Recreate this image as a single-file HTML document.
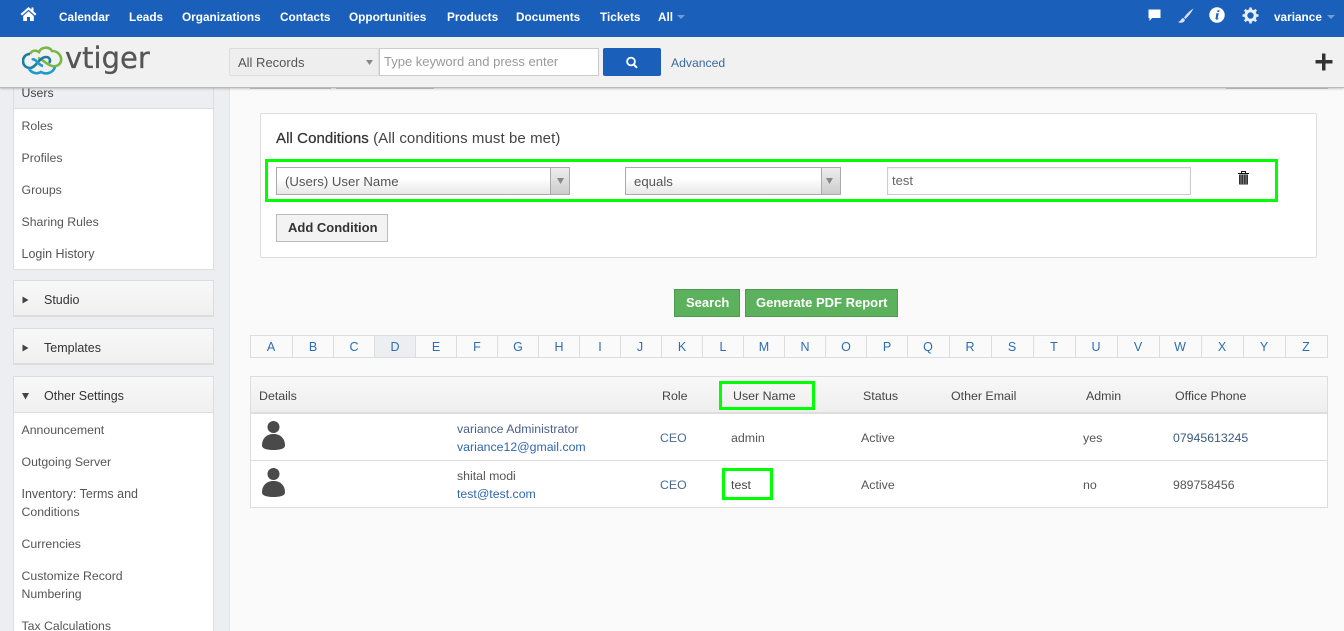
<!DOCTYPE html>
<html><head><meta charset="utf-8"><title>vtiger</title>
<style>
html{margin:0;padding:0;height:631px;overflow:hidden}
body{margin:0;padding:0;width:1344px;height:631px;position:relative;overflow:hidden;background:#fafafa;font:13px/18px "Liberation Sans",sans-serif;color:#444}
div,span.t{position:absolute;box-sizing:border-box}
.t{position:absolute;white-space:nowrap;line-height:18px}
.n{color:#fff;font-weight:bold;font-size:11.8px;top:8px}
.s{left:21.5px;color:#555;font-size:12.3px}
.h{color:#444;font-size:12.4px;top:387px}
.c{color:#555;font-size:12.4px}
.b{color:#3d6a9e;font-size:12.3px}
.g{border:3px solid #0f0;background:transparent}
.l{top:338px;height:18px;color:#2a6db5;font-size:12.5px;text-align:center;width:20px}
.v{top:335px;width:1px;height:23px;background:#ddd}
.p{left:13px;width:201px;height:37px;background:linear-gradient(#f8f8f8,#f0f0f0);border:1px solid #ddd;border-bottom:2px solid #ddd}
</style></head><body>
<div style="left:0;top:0;width:229px;height:631px;background:#eceef2"></div>
<div style="left:229px;top:0;width:1px;height:631px;background:#e4e4e4"></div>

<!-- sidebar -->
<div style="left:13px;top:80px;width:201px;height:190px;background:#fff;border:1px solid #ddd;border-top:0"></div>
<div style="left:14px;top:80px;width:199px;height:29px;background:#eceef2;border-bottom:1px solid #ddd"></div>
<span class="t s" style="top:84px;color:#444">Users</span>
<span class="t s" style="top:117px">Roles</span>
<span class="t s" style="top:149px">Profiles</span>
<span class="t s" style="top:181px">Groups</span>
<span class="t s" style="top:213px">Sharing Rules</span>
<span class="t s" style="top:245px;font-size:12.5px">Login History</span>
<div class="p" style="top:280px"></div>
<div class="p" style="top:328px"></div>
<svg style="position:absolute;left:22px;top:296px" width="8" height="8"><path d="M0.500 0.500L6.500 4L0.500 7.500Z" fill="#444"/></svg>
<svg style="position:absolute;left:22px;top:344px" width="8" height="8"><path d="M0.500 0.500L6.500 4L0.500 7.500Z" fill="#444"/></svg>
<span class="t s" style="left:44px;top:291px;color:#333;font-size:12.5px">Studio</span>
<span class="t s" style="left:44px;top:339px;color:#333;font-size:12.5px">Templates</span>
<div style="left:13px;top:376px;width:201px;height:255px;background:#fff;border:1px solid #ddd;border-bottom:0"></div>
<div style="left:14px;top:377px;width:199px;height:36px;background:linear-gradient(#f8f8f8,#f0f0f0);border-bottom:1px solid #ddd"></div>
<svg style="position:absolute;left:22px;top:392px" width="8" height="8"><path d="M0 1L7 1L3.500 7.500Z" fill="#444"/></svg>
<span class="t s" style="left:44px;top:387px;color:#333;font-size:12.5px">Other Settings</span>
<span class="t s" style="top:421px">Announcement</span>
<span class="t s" style="top:453px">Outgoing Server</span>
<span class="t s" style="top:485px;font-size:12.5px">Inventory: Terms and</span>
<span class="t s" style="top:503px">Conditions</span>
<span class="t s" style="top:535px">Currencies</span>
<span class="t s" style="top:567px">Customize Record</span>
<span class="t s" style="top:585px">Numbering</span>
<span class="t s" style="top:617px">Tax Calculations</span>

<!-- behind header tabs -->
<div style="left:250px;top:80px;width:81px;height:9px;background:#f2f2f2;border:1px solid #ccc"></div>
<div style="left:336px;top:80px;width:98px;height:9px;background:#f2f2f2;border:1px solid #ccc"></div>
<div style="left:1226px;top:80px;width:102px;height:9px;background:#f2f2f2;border:1px solid #ccc"></div>

<!-- top nav -->
<div style="left:0;top:0;width:1344px;height:37px;background:#1a5fba"></div>
<svg style="position:absolute;left:20px;top:6px" width="17" height="16" viewBox="0 0 17 16"><path d="M8.500 1L0.500 8L2 9.500L8.500 3.800L15 9.500L16.500 8L13.500 5.300V1.500H11.500V3.500Z M3.200 10L8.500 5.300L13.800 10V15H10V11H7V15H3.200Z" fill="#fff"/></svg>
<span class="t n" style="left:59px">Calendar</span>
<span class="t n" style="left:129px">Leads</span>
<span class="t n" style="left:182px">Organizations</span>
<span class="t n" style="left:280px">Contacts</span>
<span class="t n" style="left:349px">Opportunities</span>
<span class="t n" style="left:447px">Products</span>
<span class="t n" style="left:516px">Documents</span>
<span class="t n" style="left:600px">Tickets</span>
<span class="t n" style="left:658px">All</span>
<svg style="position:absolute;left:677px;top:15px" width="8" height="4"><path d="M0 0H8L4 4Z" fill="#6f9bd6"/></svg>
<svg style="position:absolute;left:1148px;top:9px" width="13" height="13" viewBox="0 0 13 13"><path d="M0.500 0.500H12.500V9H4L1.500 12V9H0.500Z" fill="#fff"/></svg>
<svg style="position:absolute;left:1177px;top:8px" width="17" height="16" viewBox="0 0 17 16"><path d="M16.500 0.500C13 2.500 9.500 6 7 9.500L8.500 11C11.500 8 14.500 4.500 16.500 0.500Z M6.200 10C4 10.200 4.500 13 1 14C3.500 15.500 8 14.800 7.800 11.500Z" fill="#d8e3f4"/></svg>
<svg style="position:absolute;left:1209px;top:7px" width="16" height="16" viewBox="0 0 16 16"><circle cx="8" cy="8" r="7.700" fill="#fff"/><path d="M8.600 3.200h2l-.4 1.800h-2z M7.600 6.300h2.200L8.600 11.400c-.1.400.3.400 1 .1l-.2.800c-1.300.6-3 .6-2.900-.8L7.300 7.200 6.500 7Z" fill="#1a5fba"/></svg>
<svg style="position:absolute;left:1242px;top:7px" width="17" height="17" viewBox="0 0 17 17"><circle cx="8.500" cy="8.500" r="4.700" fill="none" stroke="#e8eef8" stroke-width="3"/><path d="M8.500 .5V16.500M.5 8.500H16.500M2.800 2.800L14.200 14.200M14.200 2.800L2.800 14.200" stroke="#e8eef8" stroke-width="2.600" stroke-dasharray="3 10 3 0" fill="none"/></svg>
<span class="t n" style="left:1274px">variance</span>
<svg style="position:absolute;left:1327px;top:15px" width="8" height="4"><path d="M0 0H8L4 4Z" fill="#6f9bd6"/></svg>

<!-- second bar -->
<div style="left:0;top:37px;width:1344px;height:51px;background:#f1f1f1;border-bottom:1px solid #bbb;box-shadow:0 1px 2px rgba(0,0,0,.2)"></div>
<svg style="position:absolute;left:22px;top:45px" width="42" height="32" viewBox="0 0 42 32" fill="none" stroke-width="2.600"><path d="M8 9C10 5 14 5 17 7C19 2 27 1 30 6C36 6 40 11 39 16C38 20 34 22 30 21C25 20 22 15 16 13" stroke="#7ab648"/><path d="M8 9C3 9 1 13 1 16C1 20 4 23 8 23C14 23 17 12 24 12C28 12 29 16 27 18" stroke="#1d7f9c"/><path d="M7 23C8 27 14 30 19 27C24 30 31 28 33 22M10 15C13 12 16 20 21 21" stroke="#1f9ad0"/></svg>
<span class="t" style="left:65px;top:43px;font-family:'DejaVu Sans',sans-serif;font-size:29px;line-height:30px;color:#555;-webkit-text-stroke:.3px #555">vtiger</span>
<div style="left:229px;top:48px;width:150px;height:28px;background:#eee;border:1px solid #ddd;border-radius:2px 0 0 2px"></div>
<span class="t c" style="left:238px;top:54px;font-size:13px;color:#555">All Records</span>
<svg style="position:absolute;left:366px;top:60px" width="7" height="5"><path d="M0 0H7L3.500 5Z" fill="#888"/></svg>
<div style="left:379px;top:48px;width:220px;height:28px;background:#fff;border:1px solid #ccc"></div>
<span class="t" style="left:384px;top:53px;font-size:13px;color:#999">Type keyword and press enter</span>
<div style="left:603px;top:48px;width:58px;height:28px;background:#1a5fba;border-radius:2px"></div>
<svg style="position:absolute;left:625px;top:56px" width="14" height="13" viewBox="0 0 14 13"><circle cx="6" cy="5.500" r="3.900" fill="none" stroke="#fff" stroke-width="1.800"/><path d="M8.800 8.500L12 11.800" stroke="#fff" stroke-width="2"/></svg>
<span class="t b" style="left:671px;top:54px;color:#3a6a9c;font-size:12.200px">Advanced</span>
<svg style="position:absolute;left:1315px;top:53px" width="18" height="18"><path d="M7 0.500H10.500V7H17.500V10.500H10.500V17.500H7V10.500H0.500V7H7Z" fill="#333"/></svg>

<!-- conditions -->
<div style="left:260px;top:113px;width:1057px;height:145px;background:#fff;border:1px solid #ddd;border-radius:2px"></div>
<span class="t" style="left:276px;top:130px;font-size:15px;letter-spacing:.08px;color:#333"><span style="-webkit-text-stroke:.25px #333">All Conditions</span> <span style="color:#444">(All conditions must be met)</span></span>
<div style="left:276px;top:167px;width:294px;height:28px;background:linear-gradient(#fff 40%,#e8e8e8);border:1px solid #aaa"></div>
<div style="left:550px;top:167px;width:20px;height:28px;background:linear-gradient(#eee,#ccc);border:1px solid #aaa"></div>
<svg style="position:absolute;left:557px;top:178px" width="7" height="6"><path d="M0 0H7L3.500 6Z" fill="#888"/></svg>
<span class="t c" style="left:285px;top:173px;font-size:13.200px">(Users) User Name</span>
<div style="left:625px;top:167px;width:216px;height:28px;background:linear-gradient(#fff 40%,#e8e8e8);border:1px solid #aaa"></div>
<div style="left:821px;top:167px;width:20px;height:28px;background:linear-gradient(#eee,#ccc);border:1px solid #aaa"></div>
<svg style="position:absolute;left:826px;top:178px" width="7" height="6"><path d="M0 0H7L3.500 6Z" fill="#888"/></svg>
<span class="t c" style="left:634px;top:173px;font-size:13.200px">equals</span>
<div style="left:887px;top:167px;width:304px;height:28px;background:#fff;border:1px solid #ccc;box-shadow:inset 0 1px 2px rgba(0,0,0,.08)"></div>
<span class="t" style="left:892px;top:172px;font-size:13px;color:#666">test</span>
<svg style="position:absolute;left:1237px;top:170px" width="13" height="15" viewBox="0 0 13 15"><path d="M1 3.500H12" stroke="#111" stroke-width="1"/><path d="M4.500 3.500V1.500H8.500V3.500" fill="none" stroke="#111"/><path d="M2 4.500H11V14.500H2Z" fill="#333"/><path d="M4 5V14M6.500 5V14M9 5V14" stroke="#999" stroke-width=".8"/></svg>
<div class="g" style="left:265px;top:159px;width:1013px;height:43px"></div>
<div style="left:276px;top:214px;width:112px;height:28px;background:#f3f3f3;border:1px solid #bbb"></div>
<span class="t" style="left:288px;top:219px;font-size:13px;font-weight:bold;color:#333">Add Condition</span>

<!-- buttons -->
<div style="left:674px;top:289px;width:66px;height:28px;background:#5cb15d;border:1px solid #4e9a50"></div>
<span class="t" style="left:686px;top:294px;font-size:13px;font-weight:bold;color:#fff">Search</span>
<div style="left:745px;top:289px;width:153px;height:28px;background:#5cb15d;border:1px solid #4e9a50"></div>
<span class="t" style="left:756px;top:294px;font-size:13px;font-weight:bold;color:#fff">Generate PDF Report</span>

<!-- alphabet -->
<div style="left:250px;top:335px;width:1078px;height:23px;background:#fafafa;border:1px solid #ddd"></div>
<div style="left:375px;top:336px;width:40px;height:21px;background:#eceef2"></div>
<div class="v" style="left:292px"></div><div class="v" style="left:333px"></div><div class="v" style="left:374px"></div><div class="v" style="left:415px"></div><div class="v" style="left:456px"></div><div class="v" style="left:497px"></div><div class="v" style="left:538px"></div><div class="v" style="left:579px"></div><div class="v" style="left:620px"></div><div class="v" style="left:661px"></div><div class="v" style="left:702px"></div><div class="v" style="left:743px"></div><div class="v" style="left:784px"></div><div class="v" style="left:825px"></div><div class="v" style="left:866px"></div><div class="v" style="left:907px"></div><div class="v" style="left:949px"></div><div class="v" style="left:991px"></div><div class="v" style="left:1033px"></div><div class="v" style="left:1075px"></div><div class="v" style="left:1117px"></div><div class="v" style="left:1159px"></div><div class="v" style="left:1201px"></div><div class="v" style="left:1243px"></div><div class="v" style="left:1285px"></div>
<span class="t l" style="left:261px">A</span><span class="t l" style="left:303px">B</span><span class="t l" style="left:344px">C</span><span class="t l" style="left:385px">D</span><span class="t l" style="left:426px">E</span><span class="t l" style="left:467px">F</span><span class="t l" style="left:508px">G</span><span class="t l" style="left:549px">H</span><span class="t l" style="left:590px">I</span><span class="t l" style="left:630px">J</span><span class="t l" style="left:672px">K</span><span class="t l" style="left:713px">L</span><span class="t l" style="left:754px">M</span><span class="t l" style="left:795px">N</span><span class="t l" style="left:836px">O</span><span class="t l" style="left:877px">P</span><span class="t l" style="left:918px">Q</span><span class="t l" style="left:960px">R</span><span class="t l" style="left:1002px">S</span><span class="t l" style="left:1044px">T</span><span class="t l" style="left:1086px">U</span><span class="t l" style="left:1128px">V</span><span class="t l" style="left:1170px">W</span><span class="t l" style="left:1212px">X</span><span class="t l" style="left:1254px">Y</span><span class="t l" style="left:1296px">Z</span>

<!-- table -->
<div style="left:250px;top:376px;width:1078px;height:132px;background:#fff;border:1px solid #ddd"></div>
<div style="left:251px;top:377px;width:1076px;height:37px;background:linear-gradient(#f8f8f8,#eee);border-bottom:2px solid #ddd"></div>
<div style="left:251px;top:460px;width:1076px;height:1px;background:#ddd"></div>
<span class="t h" style="left:259px">Details</span>
<span class="t h" style="left:662px">Role</span>
<span class="t h" style="left:733px">User Name</span>
<span class="t h" style="left:863px">Status</span>
<span class="t h" style="left:951px">Other Email</span>
<span class="t h" style="left:1086px">Admin</span>
<span class="t h" style="left:1175px">Office Phone</span>
<svg style="position:absolute;left:261px;top:420px" width="25" height="31" viewBox="0 0 25 31"><circle cx="12.500" cy="7" r="6" fill="#4a4a4a"/><path d="M1 25.500C1 18 6 14 12.500 14S24 18 24 25.500C24 29 18 30 12.500 30S1 29 1 25.500Z" fill="#4a4a4a"/></svg>
<svg style="position:absolute;left:261px;top:467px" width="25" height="31" viewBox="0 0 25 31"><circle cx="12.500" cy="7" r="6" fill="#4a4a4a"/><path d="M1 25.500C1 18 6 14 12.500 14S24 18 24 25.500C24 29 18 30 12.500 30S1 29 1 25.500Z" fill="#4a4a4a"/></svg>
<span class="t b" style="left:457px;top:420px;color:#4a5f8a">variance Administrator</span>
<span class="t b" style="left:457px;top:438px;color:#2f66ad">variance12@gmail.com</span>
<span class="t b" style="left:457px;top:467px;color:#555">shital modi</span>
<span class="t b" style="left:457px;top:485px;color:#2f66ad">test@test.com</span>
<span class="t b" style="left:660px;top:429px;color:#4a6a94">CEO</span>
<span class="t b" style="left:660px;top:476px;color:#4a6a94">CEO</span>
<span class="t c" style="left:731px;top:429px">admin</span>
<span class="t c" style="left:731px;top:476px;color:#444">test</span>
<span class="t c" style="left:861px;top:429px">Active</span>
<span class="t c" style="left:861px;top:476px">Active</span>
<span class="t c" style="left:1083px;top:429px">yes</span>
<span class="t c" style="left:1083px;top:476px">no</span>
<span class="t b" style="left:1173px;top:429px;color:#3a5a7c">07945613245</span>
<span class="t c" style="left:1173px;top:476px;font-size:12.300px">989758456</span>
<div class="g" style="left:719px;top:381px;width:96px;height:29px"></div>
<div class="g" style="left:722px;top:468px;width:51px;height:32px"></div>
</body></html>
